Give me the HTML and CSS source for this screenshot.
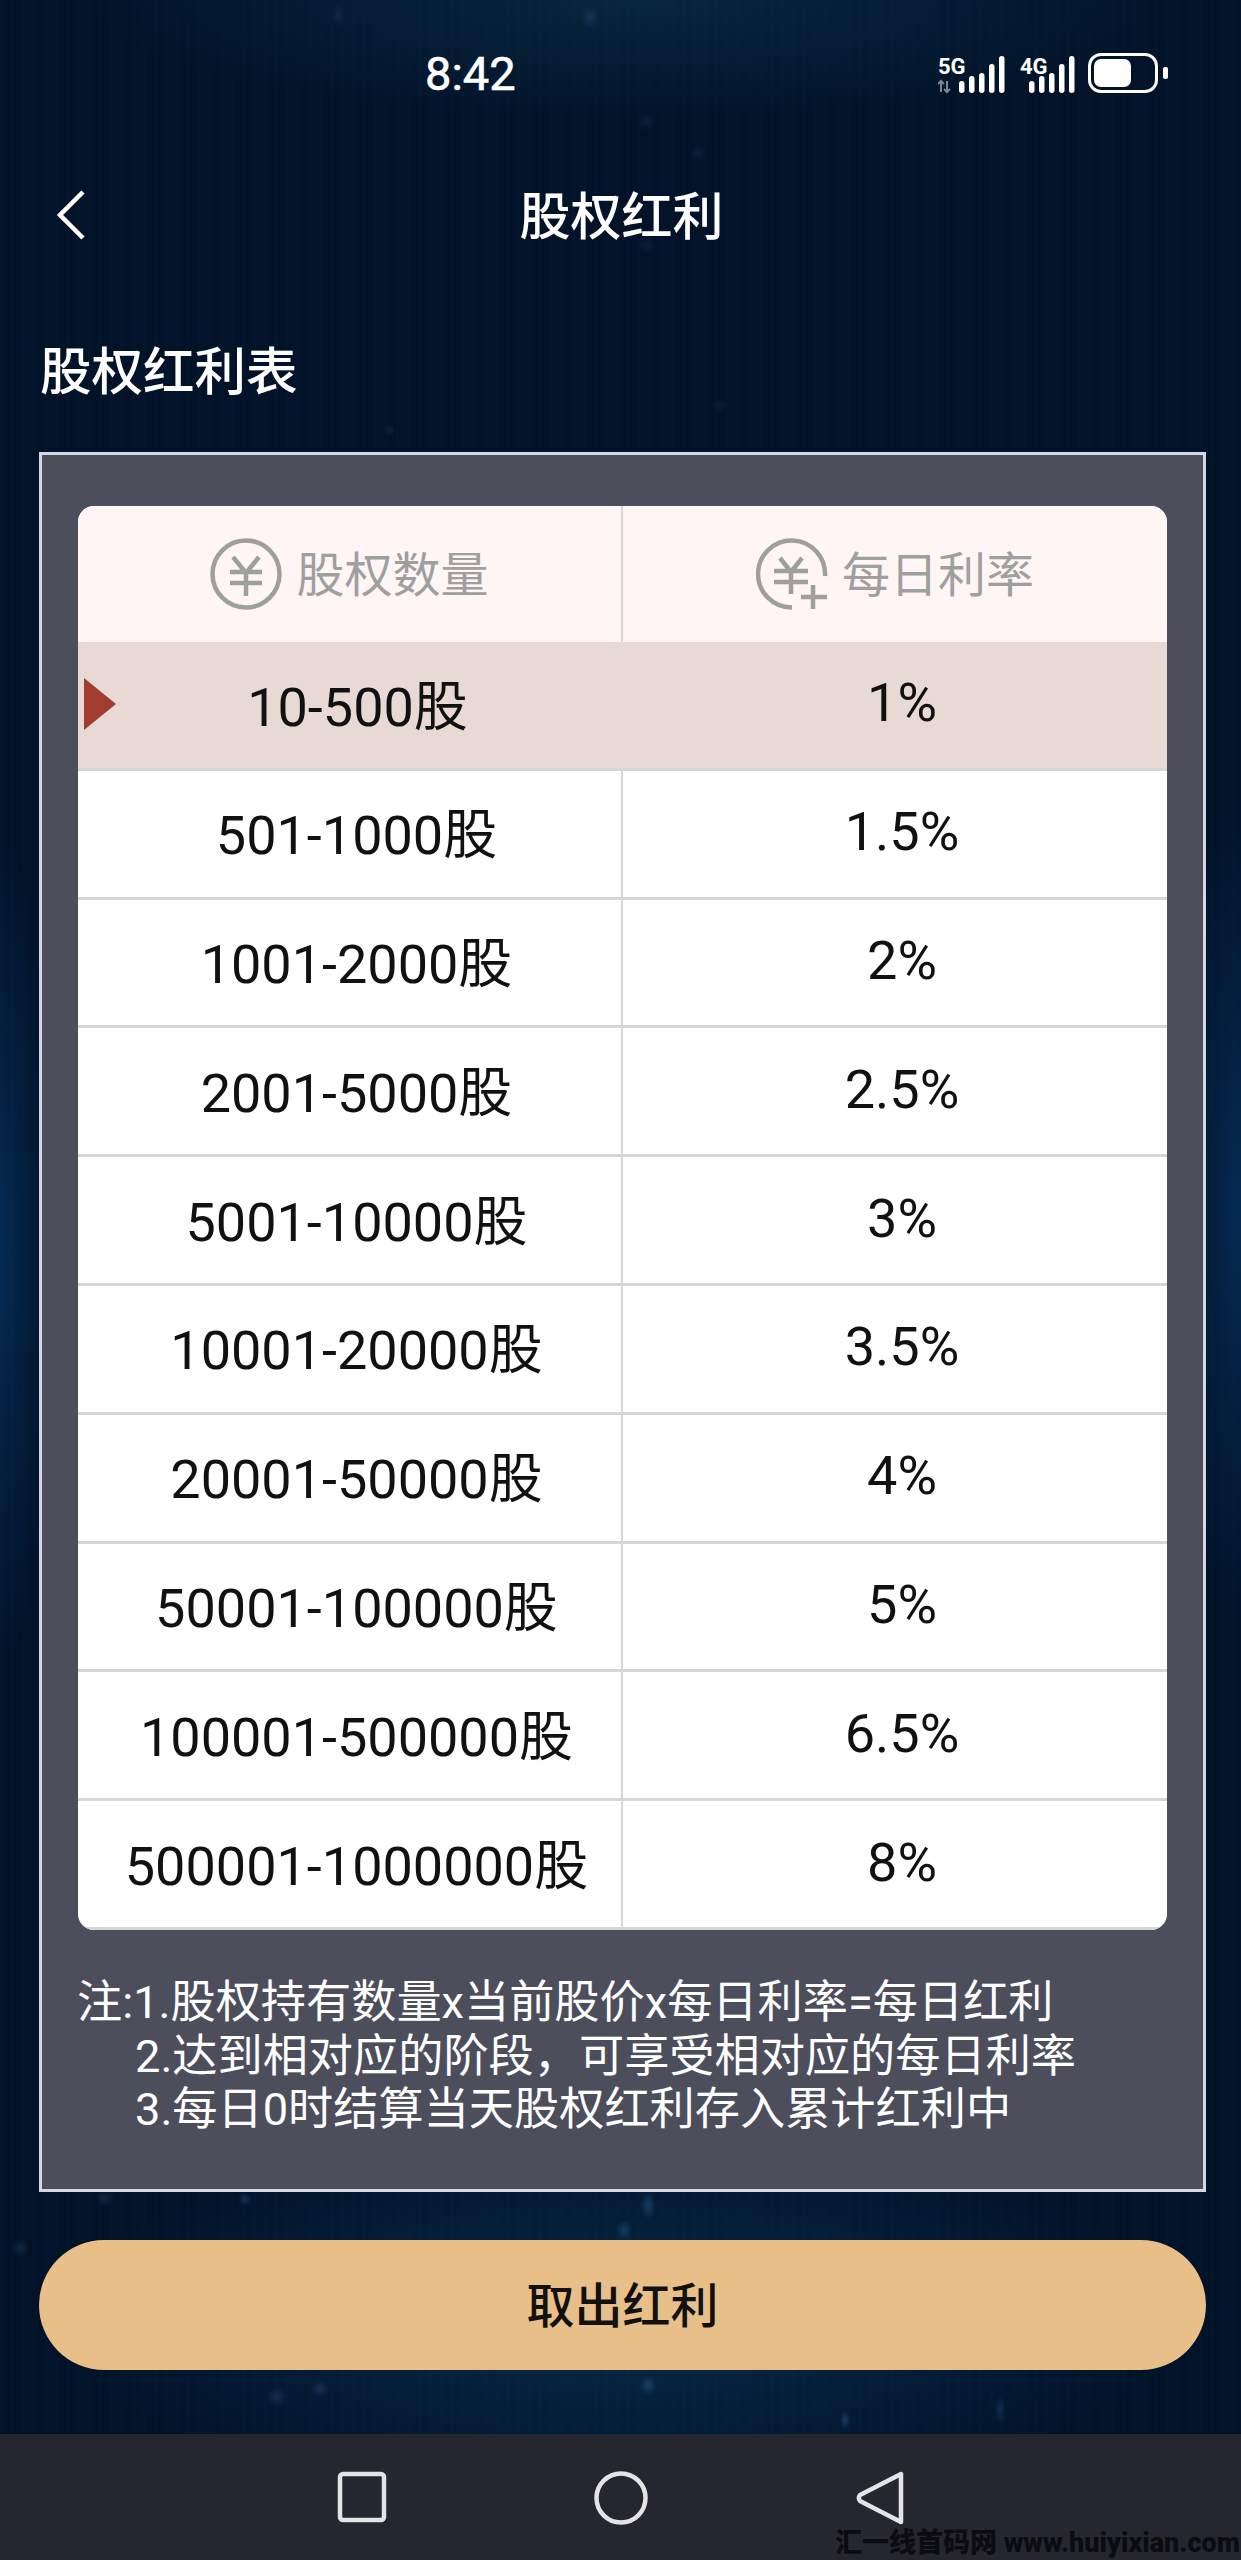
FILE: index.html
```html
<!DOCTYPE html>
<html lang="zh-CN">

<head>
    <meta charset="UTF-8">
    <meta name="viewport" content="width=device-width, initial-scale=1.0">
    <title>股权红利</title>
    <link rel="stylesheet" href="styles.css">
</head>

<body>

    <div class="screen">
        <!-- Status bar -->
        <div class="status-bar">
            <span class="time">8:42</span>
            <div class="status-icons">
                <svg class="signal" width="68" height="42" viewBox="0 0 68 42">
                    <text x="0" y="22" class="net-label">5G</text>
                    <path class="arrows" d="M3 40V29M0 32l3-3 3 3M9 29v11M6 37l3 3 3-3" />
                    <g class="bars">
                        <rect x="21" y="29" width="5.5" height="12" rx="2.7" />
                        <rect x="31" y="24" width="5.5" height="17" rx="2.7" />
                        <rect x="41" y="21" width="5.5" height="20" rx="2.7" />
                        <rect x="51" y="12" width="5.5" height="29" rx="2.7" />
                        <rect x="61" y="4" width="5.5" height="37" rx="2.7" />
                    </g>
                </svg>
                <svg class="signal" width="56" height="42" viewBox="0 0 56 42">
                    <text x="0" y="22" class="net-label">4G</text>
                    <g class="bars">
                        <rect x="9" y="29" width="5.5" height="12" rx="2.7" />
                        <rect x="19" y="24" width="5.5" height="17" rx="2.7" />
                        <rect x="29" y="21" width="5.5" height="20" rx="2.7" />
                        <rect x="39" y="12" width="5.5" height="29" rx="2.7" />
                        <rect x="49" y="4" width="5.5" height="37" rx="2.7" />
                    </g>
                </svg>
                <div class="battery">
                    <div class="battery-fill"></div>
                </div>
                <div class="battery-tip"></div>
            </div>
        </div>

        <!-- Title bar -->
        <div class="title-bar">
            <svg class="back" width="32" height="52" viewBox="0 0 32 52">
                <path d="M28 3L5 26l23 23" />
            </svg>
            <h1>股权红利</h1>
        </div>

        <h2>股权红利表</h2>

        <div class="panel">
            <div class="rate-table">
                <div class="head-row">
                    <div class="cell">
                        <svg class="coin" width="72" height="72" viewBox="0 0 72 72">
                            <circle cx="36" cy="36" r="33.5" />
                            <path d="M23 19l13 16 13-16M20 34h32M20 45h32M36 35v23" />
                        </svg>
                        <span>股权数量</span>
                    </div>
                    <div class="cell">
                        <svg class="coin" width="72" height="72" viewBox="0 0 72 72">
                            <path d="M69 38A33.5 33.5 0 1 0 36 69.5M24 20l11 14 11-14M18 33h34M18 44h34M35 34v22" />
                            <path d="M57 47v24M45 59h26" />
                        </svg>
                        <span>每日利率</span>
                    </div>
                </div>
                <div class="row current">
                    <div class="marker"></div>
                    <div class="cell">10-500股</div>
                    <div class="cell">1%</div>
                </div>
                <div class="row">
                    <div class="cell">501-1000股</div>
                    <div class="cell">1.5%</div>
                </div>
                <div class="row">
                    <div class="cell">1001-2000股</div>
                    <div class="cell">2%</div>
                </div>
                <div class="row">
                    <div class="cell">2001-5000股</div>
                    <div class="cell">2.5%</div>
                </div>
                <div class="row">
                    <div class="cell">5001-10000股</div>
                    <div class="cell">3%</div>
                </div>
                <div class="row">
                    <div class="cell">10001-20000股</div>
                    <div class="cell">3.5%</div>
                </div>
                <div class="row">
                    <div class="cell">20001-50000股</div>
                    <div class="cell">4%</div>
                </div>
                <div class="row">
                    <div class="cell">50001-100000股</div>
                    <div class="cell">5%</div>
                </div>
                <div class="row">
                    <div class="cell">100001-500000股</div>
                    <div class="cell">6.5%</div>
                </div>
                <div class="row">
                    <div class="cell">500001-1000000股</div>
                    <div class="cell">8%</div>
                </div>
            </div>

            <div class="notes">
                <p>注:1.股权持有数量x当前股价x每日利率=每日红利</p>
                <p class="indent">2.达到相对应的阶段，可享受相对应的每日利率</p>
                <p class="indent">3.每日0时结算当天股权红利存入累计红利中</p>
            </div>
        </div>

        <button type="button" class="withdraw">取出红利</button>

        <!-- Android navigation bar -->
        <div class="nav-bar">
            <svg class="nav-icon" width="50" height="52" viewBox="0 0 50 52">
                <rect x="3" y="3" width="44" height="46" rx="3" />
            </svg>
            <svg class="nav-icon" width="54" height="54" viewBox="0 0 54 54">
                <circle cx="27" cy="27" r="24.5" />
            </svg>
            <svg class="nav-icon" width="48" height="54" viewBox="0 0 48 54">
                <path d="M45 3v48L4 30a5 5 0 0 1 0-6z" />
            </svg>
            <div class="watermark">汇一线首码网 www.huiyixian.com</div>
        </div>
    </div>

</body>

</html>
```

FILE: styles.css
```css
* {
    box-sizing: border-box;
}

body {
    margin: 0;
    padding: 0;
    background-color: #021329;
    font-family: "Roboto", "Noto Sans CJK SC", sans-serif;
}

.screen {
    width: 1241px;
    height: 2560px;
    display: flex;
    flex-direction: column;
    color: #fff;
    background-color: #021329;
    background-image:
        radial-gradient(circle at 20px 2248px, rgba(80, 130, 190, .18) 0, rgba(80, 130, 190, 0) 9px),
        radial-gradient(circle at 105px 2198px, rgba(80, 130, 190, .18) 0, rgba(80, 130, 190, 0) 9px),
        radial-gradient(circle at 245px 2199px, rgba(80, 130, 190, .25) 0, rgba(80, 130, 190, 0) 7px),
        radial-gradient(circle at 277px 2397px, rgba(80, 130, 190, .2) 0, rgba(80, 130, 190, 0) 10px),
        radial-gradient(circle at 320px 2389px, rgba(80, 130, 190, .2) 0, rgba(80, 130, 190, 0) 9px),
        radial-gradient(ellipse 8px 14px at 648px 2205px, rgba(80, 140, 200, .28) 0, rgba(80, 140, 200, 0) 100%),
        radial-gradient(ellipse 8px 10px at 624px 2230px, rgba(80, 140, 200, .25) 0, rgba(80, 140, 200, 0) 100%),
        radial-gradient(ellipse 9px 10px at 648px 2385px, rgba(80, 140, 200, .28) 0, rgba(80, 140, 200, 0) 100%),
        radial-gradient(ellipse 5px 10px at 845px 2420px, rgba(80, 140, 200, .3) 0, rgba(80, 140, 200, 0) 100%),
        radial-gradient(ellipse 6px 14px at 1000px 2410px, rgba(80, 140, 200, .18) 0, rgba(80, 140, 200, 0) 100%),
        radial-gradient(ellipse 8px 12px at 590px 17px, rgba(80, 130, 190, .18) 0, rgba(80, 130, 190, 0) 100%),
        radial-gradient(ellipse 6px 12px at 338px 15px, rgba(80, 130, 190, .15) 0, rgba(80, 130, 190, 0) 100%),
        radial-gradient(circle at 647px 122px, rgba(80, 130, 190, .12) 0, rgba(80, 130, 190, 0) 9px),
        radial-gradient(circle at 647px 245px, rgba(80, 130, 190, .1) 0, rgba(80, 130, 190, 0) 9px),
        radial-gradient(circle at 698px 153px, rgba(80, 130, 190, .1) 0, rgba(80, 130, 190, 0) 9px),
        radial-gradient(circle at 720px 405px, rgba(80, 130, 190, .1) 0, rgba(80, 130, 190, 0) 7px),
        radial-gradient(circle at 390px 430px, rgba(80, 130, 190, .12) 0, rgba(80, 130, 190, 0) 6px),
        repeating-linear-gradient(90deg, rgba(60, 120, 180, .015) 0, rgba(60, 120, 180, .015) 3px, rgba(60, 120, 180, 0) 3px, rgba(60, 120, 180, 0) 11px),
        radial-gradient(ellipse 560px 190px at 620px 2320px, #072a4a 0, rgba(7, 42, 74, 0) 100%),
        radial-gradient(ellipse 560px 120px at 640px 0, #072640 0, rgba(7, 38, 64, 0) 100%),
        radial-gradient(ellipse 60px 420px at 1241px 1210px, #052a52 0, rgba(5, 42, 82, 0) 100%),
        radial-gradient(ellipse 50px 420px at 0 1250px, #052a52 0, rgba(5, 42, 82, 0) 100%);
}

.status-bar {
    height: 146px;
    display: flex;
    align-items: center;
    justify-content: space-between;
    padding: 0 73px 0 425px;
}

.time {
    font-size: 47px;
    font-weight: 400;
    -webkit-text-stroke: .6px #fff;
}

.status-icons {
    display: flex;
    align-items: center;
    height: 42px;
}

.signal {
    display: block;
    margin-right: 14px;
}

.signal+.signal {
    margin-right: 12px;
}

.net-label {
    font-size: 22px;
    font-weight: 700;
    fill: #fff;
}

.bars {
    fill: #fff;
}

.arrows {
    fill: none;
    stroke: #7d8794;
    stroke-width: 2;
}

.battery {
    width: 70px;
    height: 40px;
    padding: 3px;
    border: 3px solid #fff;
    border-radius: 13px;
}

.battery-fill {
    width: 37px;
    height: 100%;
    background-color: #fff;
    border-radius: 7px;
}

.battery-tip {
    width: 5px;
    height: 12px;
    margin-left: 5px;
    background-color: #fff;
    border-radius: 2px;
}

.title-bar {
    height: 138px;
    display: flex;
    align-items: center;
    justify-content: center;
    position: relative;
}

.title-bar h1 {
    margin: 0 0 5px 2px;
    font-size: 51px;
    font-weight: 500;
}

.back {
    position: absolute;
    left: 55px;
    top: 43px;
    fill: none;
    stroke: #fff;
    stroke-width: 4.5;
}

h2 {
    margin: 0 0 0 40px;
    height: 168px;
    padding-top: 52px;
    font-size: 51.5px;
    line-height: 74px;
    font-weight: 500;
}

.panel {
    height: 1740px;
    margin: 0 35px 0 39px;
    padding: 51px 36px 0 36px;
    background-color: #4c4e5c;
    border: 3px solid #d5d8e4;
}

.rate-table {
    height: 1424px;
    display: flex;
    flex-direction: column;
    background-color: #fff;
    border-radius: 16px;
    overflow: hidden;
    color: #111;
    font-size: 54px;
}

.head-row {
    height: 136px;
    flex: none;
    display: grid;
    grid-template-columns: 545px 1fr;
    background-color: #fff5f4;
    color: #a09f9f;
    font-size: 48px;
}

.head-row .cell {
    gap: 14px;
}

.head-row span {
    margin-bottom: 6px;
}

.coin {
    fill: none;
    stroke: #a09f9f;
    stroke-width: 4.5;
}

.row {
    flex: 1;
    display: grid;
    grid-template-columns: 545px 1fr;
    border-bottom: 3px solid #d6d6d6;
    position: relative;
}

.row.current {
    background-color: #e8d9d5;
}

.cell {
    display: flex;
    align-items: center;
    justify-content: center;
}

.row .cell {
    padding: 0 0 4px 14px;
}

.row .cell:first-of-type {
    padding-bottom: 6px;
}

.cell:first-of-type {
    border-right: 2px solid #d6d6d6;
}

.marker {
    position: absolute;
    left: 6px;
    top: 36px;
    width: 0;
    height: 0;
    border-top: 26px solid transparent;
    border-bottom: 26px solid transparent;
    border-left: 32px solid #a23c2e;
}

.notes {
    margin-top: 46px;
    margin-left: -1px;
    font-size: 45.2px;
    line-height: 53.5px;
}

.notes p {
    margin: 0;
}

.notes .indent {
    padding-left: 58px;
}

.withdraw {
    display: block;
    height: 130px;
    margin: 48px 35px 0 39px;
    padding: 0 0 6px;
    border: none;
    border-radius: 65px;
    background-color: #e8bf88;
    color: #111;
    font-family: inherit;
    font-size: 48px;
    font-weight: 500;
}

.nav-bar {
    margin-top: auto;
    height: 126px;
    background-color: #26272e;
    display: flex;
    align-items: flex-start;
    padding: 37px 0 0 337px;
    position: relative;
}

.nav-icon {
    fill: none;
    stroke: #e4e4e6;
    stroke-width: 4.5;
    stroke-linejoin: round;
}

.nav-icon:nth-child(2) {
    margin-left: 207px;
}

.nav-icon:nth-child(3) {
    margin-left: 208px;
}

.watermark {
    position: absolute;
    right: 1px;
    bottom: 2px;
    font-size: 27px;
    line-height: 30px;
    font-weight: 900;
    color: #0c0c10;
    white-space: nowrap;
}
```
